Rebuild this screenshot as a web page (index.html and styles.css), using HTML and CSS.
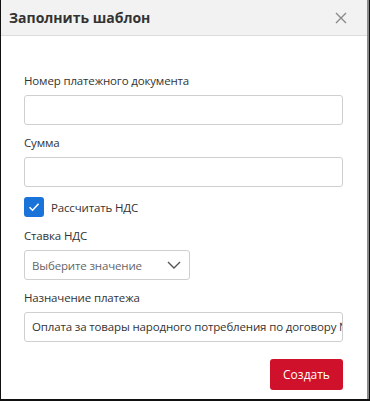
FILE: index.html
```html
<!DOCTYPE html>
<html lang="ru">
<head>
    <meta charset="UTF-8">
    <title>Заполнить шаблон</title>
    <link rel="stylesheet" href="styles.css">
</head>
<body>
    <div class="frame">
        <div class="dialog">
            <div class="dialog-head">
                <span class="dialog-title">Заполнить шаблон</span>
                <svg class="close" width="12" height="12" viewBox="0 0 12 12"><path d="M1 1L11 11M11 1L1 11" stroke="#8a8a8a" stroke-width="1.4" fill="none"/></svg>
            </div>
            <div class="dialog-body">
                <div class="field">
                    <label class="label">Номер платежного документа</label>
                    <div class="input"></div>
                </div>
                <div class="field">
                    <label class="label">Сумма</label>
                    <div class="input"></div>
                </div>
                <div class="check-row">
                    <span class="checkbox"><svg width="14" height="14" viewBox="0 0 14 14"><path d="M2.5 7.2L5.6 10.2L11.6 3.8" stroke="#fff" stroke-width="1.6" fill="none"/></svg></span>
                    <span class="check-label">Рассчитать НДС</span>
                </div>
                <div class="field">
                    <label class="label">Ставка НДС</label>
                    <div class="select">
                        <span class="placeholder">Выберите значение</span>
                        <svg width="14" height="8" viewBox="0 0 14 8"><path d="M1 1L7 7L13 1" stroke="#555" stroke-width="1.4" fill="none"/></svg>
                    </div>
                </div>
                <div class="field">
                    <label class="label">Назначение платежа</label>
                    <div class="input filled">Оплата за товары народного потребления по договору №</div>
                </div>
                <div class="actions">
                    <button class="btn-create">Создать</button>
                </div>
            </div>
        </div>
    </div>
</body>
</html>
```

FILE: styles.css
```css
body { margin: 0; font-family: "Open Sans", "Noto Sans", sans-serif; color: #333; background: #fff; }
.frame { width: 370px; height: 401px; box-sizing: border-box; border: solid #111; border-width: 0 1px 2px 1px; }
.dialog { height: 100%; box-sizing: border-box; border-right: 2px solid #8a8a8a; background: #fff; }
.dialog-head { height: 36px; box-sizing: border-box; background: #f2f2f2; border-bottom: 1px solid #dcdcdc; display: flex; align-items: center; justify-content: space-between; padding: 0 20px 0 8px; }
.dialog-title { font-size: 14px; font-weight: bold; color: #333; }
.dialog-body { padding: 37px 24px 0 23px; }
.field { margin-bottom: 10px; }
.label { display: block; font-size: 11.5px; letter-spacing: -0.15px; line-height: 16px; margin-bottom: 6px; color: #333; }
.input { height: 30px; box-sizing: border-box; border: 1px solid #cfcfcf; border-radius: 3px; }
.input.filled { font-size: 11.5px; letter-spacing: -0.15px; line-height: 28px; padding-left: 7px; white-space: nowrap; overflow: hidden; color: #333; }
.check-row { display: flex; align-items: center; margin-bottom: 11px; }
.checkbox { width: 20px; height: 20px; border-radius: 3px; background: #1a73d9; display: flex; align-items: center; justify-content: center; }
.check-label { font-size: 11.5px; letter-spacing: -0.15px; margin-left: 7px; }
.select { width: 166px; height: 30px; box-sizing: border-box; border: 1px solid #cfcfcf; border-radius: 3px; display: flex; align-items: center; justify-content: space-between; padding: 0 8px 0 7px; }
.placeholder { font-size: 11.5px; letter-spacing: -0.15px; color: #666; }
.actions { display: flex; justify-content: flex-end; margin-top: 17px; }
.btn-create { width: 73px; height: 31px; border: 0; border-radius: 3px; background: #d0112b; color: #fff; font-family: "Open Sans", "Noto Sans", sans-serif; font-size: 12px; }
```
